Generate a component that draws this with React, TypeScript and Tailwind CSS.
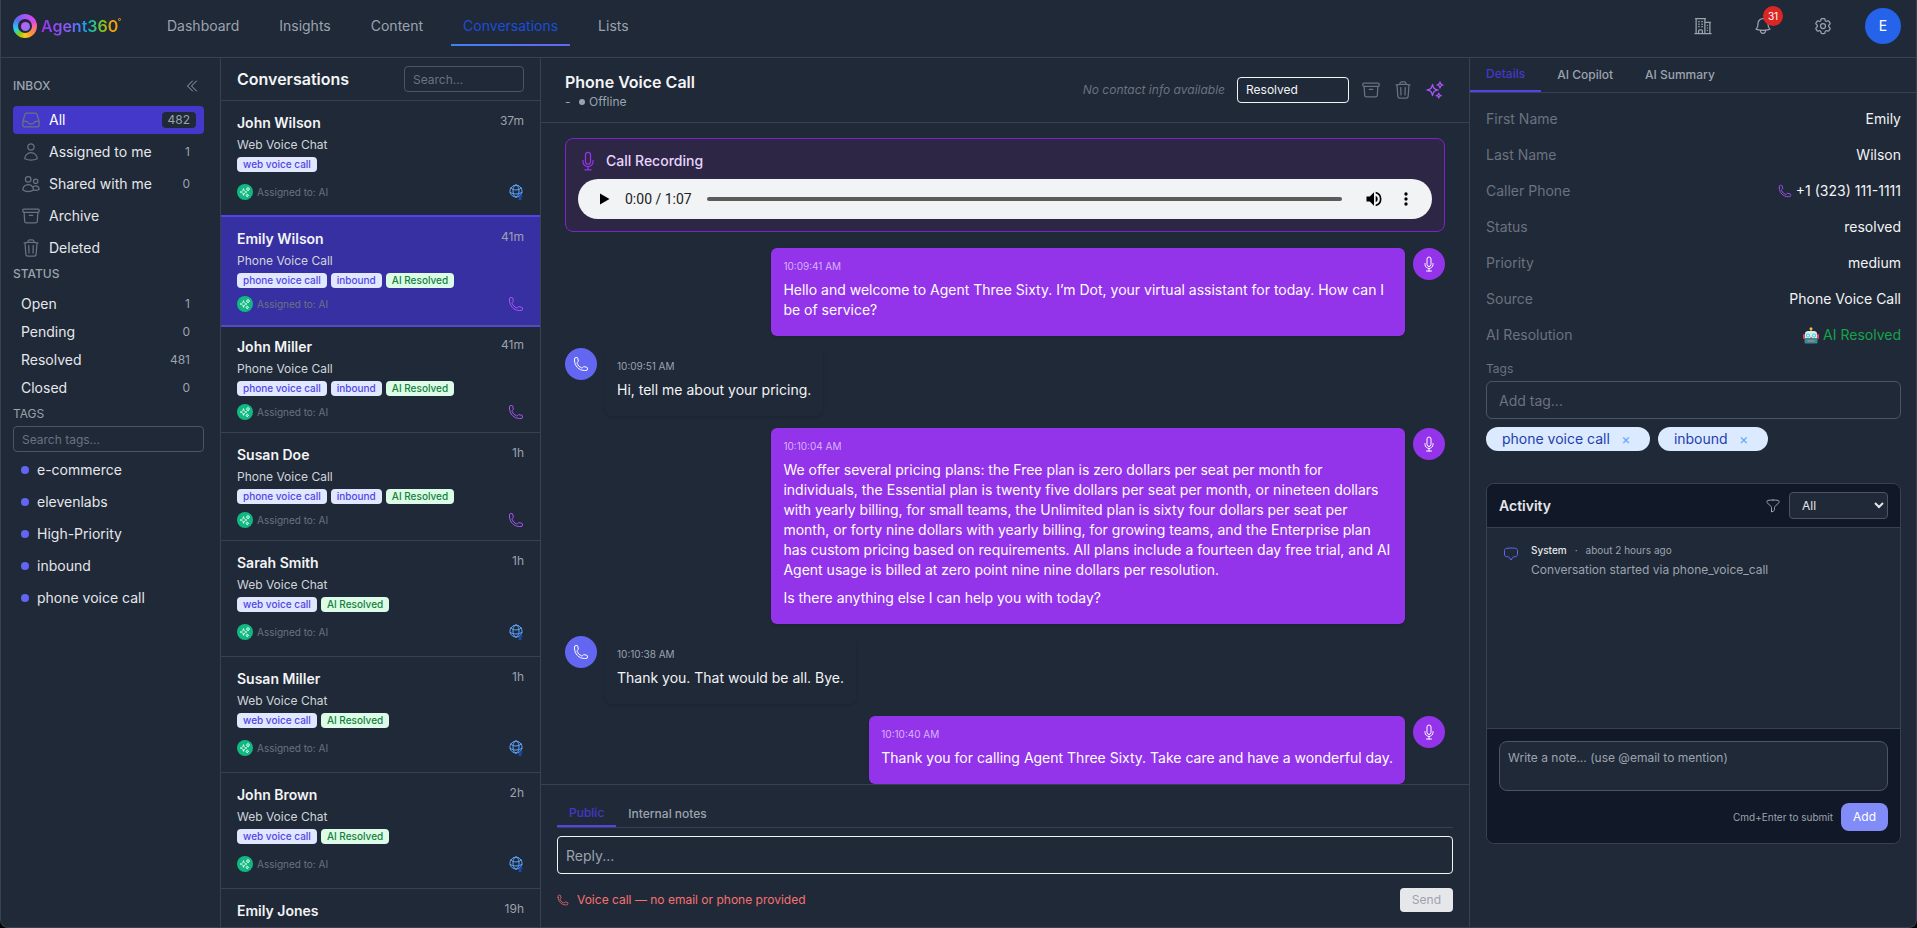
import type { ReactNode } from "react";
import {
  HiOutlineArchiveBox,
  HiOutlineBell,
  HiOutlineBuildingOffice2,
  HiOutlineChatBubbleBottomCenter,
  HiOutlineChevronDoubleLeft,
  HiOutlineCog6Tooth,
  HiOutlineFunnel,
  HiOutlineGlobeAlt,
  HiOutlineInbox,
  HiOutlineMicrophone,
  HiOutlinePhone,
  HiOutlineSparkles,
  HiOutlineTrash,
  HiOutlineUser,
  HiOutlineUsers,
} from "react-icons/hi2";

const navLinks = ["Dashboard", "Insights", "Content", "Conversations", "Lists"];

const inboxItems = [
  { label: "All", count: "482", icon: HiOutlineInbox, active: true },
  { label: "Assigned to me", count: "1", icon: HiOutlineUser },
  { label: "Shared with me", count: "0", icon: HiOutlineUsers },
  { label: "Archive", icon: HiOutlineArchiveBox },
  { label: "Deleted", icon: HiOutlineTrash },
];

const statuses = [
  { label: "Open", count: "1" },
  { label: "Pending", count: "0" },
  { label: "Resolved", count: "481" },
  { label: "Closed", count: "0" },
];

const tagList = ["e-commerce", "elevenlabs", "High-Priority", "inbound", "phone voice call"];

type Conversation = {
  name: string;
  time: string;
  channel: "web" | "phone";
  tags: string[];
  resolved?: boolean;
  selected?: boolean;
};

const conversations: Conversation[] = [
  { name: "John Wilson", time: "37m", channel: "web", tags: ["web voice call"] },
  { name: "Emily Wilson", time: "41m", channel: "phone", tags: ["phone voice call", "inbound"], resolved: true, selected: true },
  { name: "John Miller", time: "41m", channel: "phone", tags: ["phone voice call", "inbound"], resolved: true },
  { name: "Susan Doe", time: "1h", channel: "phone", tags: ["phone voice call", "inbound"], resolved: true },
  { name: "Sarah Smith", time: "1h", channel: "web", tags: ["web voice call"], resolved: true },
  { name: "Susan Miller", time: "1h", channel: "web", tags: ["web voice call"], resolved: true },
  { name: "John Brown", time: "2h", channel: "web", tags: ["web voice call"], resolved: true },
  { name: "Emily Jones", time: "19h", channel: "web", tags: ["web voice call"], resolved: true },
];

type Message = { from: "agent" | "caller"; time: string; text: string[] };

const messages: Message[] = [
  {
    from: "agent",
    time: "10:09:41 AM",
    text: ["Hello and welcome to Agent Three Sixty. I’m Dot, your virtual assistant for today. How can I be of service?"],
  },
  { from: "caller", time: "10:09:51 AM", text: ["Hi, tell me about your pricing."] },
  {
    from: "agent",
    time: "10:10:04 AM",
    text: [
      "We offer several pricing plans: the Free plan is zero dollars per seat per month for individuals, the Essential plan is twenty five dollars per seat per month, or nineteen dollars with yearly billing, for small teams, the Unlimited plan is sixty four dollars per seat per month, or forty nine dollars with yearly billing, for growing teams, and the Enterprise plan has custom pricing based on requirements. All plans include a fourteen day free trial, and AI Agent usage is billed at zero point nine nine dollars per resolution.",
      "Is there anything else I can help you with today?",
    ],
  },
  { from: "caller", time: "10:10:38 AM", text: ["Thank you. That would be all. Bye."] },
  {
    from: "agent",
    time: "10:10:40 AM",
    text: ["Thank you for calling Agent Three Sixty. Take care and have a wonderful day."],
  },
];

function Logo() {
  return (
    <a href="#" className="flex items-center gap-1 w-[142px] h-9">
      <span className="flex items-center justify-center size-6 rounded-full bg-[conic-gradient(from_0deg,#a855f7,#d946ef_60deg,#fb7185_100deg,#fb923c_140deg,#facc15_180deg,#84cc16_215deg,#22d3ee_250deg,#6366f1_310deg,#a855f7)]">
        <span className="flex items-center justify-center size-[14px] rounded-full bg-[#1f2937]">
          <span className="size-[9px] rounded-full bg-gradient-to-br from-[#d946ef] to-[#6d7cf8]" />
        </span>
      </span>
      <span className="flex items-start">
        <span className="text-base font-semibold bg-[linear-gradient(90deg,#9333ea,#8b5cf6_35%,#3b82f6_52%,#06b6d4_62%,#84cc16_80%,#f59e0b_92%)] bg-clip-text text-transparent">
          Agent360
        </span>
        <span className="size-[3px] mt-1 rounded-full border border-[#f59e0b]" />
      </span>
    </a>
  );
}

function TopBar() {
  return (
    <header className="flex items-start justify-between h-[58px] shrink-0 pt-2 pl-3 pr-[15px] border-b border-[#374151]">
      <div className="flex">
        <Logo />
        <nav className="flex gap-4">
          {navLinks.map((label) => (
            <a
              key={label}
              href="#"
              className={
                label === "Conversations"
                  ? "relative px-3 py-2 text-sm text-[#1d4ed8]"
                  : "px-3 py-2 text-sm text-[#9ca3af]"
              }
            >
              {label}
              {label === "Conversations" && (
                <span className="absolute inset-x-0 top-full h-0.5 bg-gradient-to-r from-[#3b82f6] to-[#6366f1]" />
              )}
            </a>
          ))}
        </nav>
      </div>
      <div className="flex gap-6 text-[#9ca3af]">
        <button aria-label="Organization" className="flex items-center justify-center size-9">
          <HiOutlineBuildingOffice2 className="size-5" />
        </button>
        <button aria-label="Notifications" className="relative flex items-center justify-center size-9">
          <HiOutlineBell className="size-5" />
          <span className="absolute -top-0.5 -right-0.5 flex items-center justify-center size-5 rounded-full bg-[#dc2626] text-white text-[10px]">
            31
          </span>
        </button>
        <button aria-label="Settings" className="flex items-center justify-center size-9">
          <HiOutlineCog6Tooth className="size-5" />
        </button>
        <button className="flex items-center justify-center size-9 rounded-full bg-[#2563eb] text-white text-sm">
          E
        </button>
      </div>
    </header>
  );
}

function Sidebar() {
  return (
    <aside className="w-[220px] shrink-0 pl-3 pr-4 pt-4 border-r border-[#374151] text-[#e5e7eb] text-sm">
      <div className="flex items-center justify-between h-6 mb-2 pr-1">
        <h2 className="text-xs font-medium text-[#9ca3af]">INBOX</h2>
        <button aria-label="Collapse sidebar" className="text-[#9ca3af]">
          <HiOutlineChevronDoubleLeft className="size-4" />
        </button>
      </div>
      <ul className="flex flex-col gap-1">
        {inboxItems.map(({ label, count, icon: Icon, active }) => (
          <li key={label}>
            <a
              href="#"
              className={
                active
                  ? "flex items-center gap-2 h-7 px-2 rounded bg-[#4338ca] text-white"
                  : "flex items-center gap-2 h-7 px-2 rounded"
              }
            >
              <Icon className="size-5 text-[#6b7280]" />
              <span className="flex-1">{label}</span>
              {count && (
                <span
                  className={
                    active
                      ? "px-1.5 rounded bg-[#1f2937] text-xs text-[#9ca3af]"
                      : "px-1.5 text-xs text-[#9ca3af]"
                  }
                >
                  {count}
                </span>
              )}
            </a>
          </li>
        ))}
      </ul>

      <h2 className="mt-1 mb-2 text-xs font-medium leading-4 text-[#9ca3af]">STATUS</h2>
      <ul>
        {statuses.map((s) => (
          <li key={s.label}>
            <a href="#" className="flex items-center justify-between h-7 pl-2 pr-[14px]">
              <span>{s.label}</span>
              <span className="text-xs text-[#9ca3af]">{s.count}</span>
            </a>
          </li>
        ))}
      </ul>

      <h2 className="mt-1 mb-1 text-xs leading-4 text-[#9ca3af]">TAGS</h2>
      <input
        type="text"
        aria-label="Search tags"
        placeholder="Search tags..."
        className="block w-full h-[26px] px-2 mb-1 rounded border border-[#4b5563] text-xs placeholder:text-[#6b7280]"
      />
      <ul className="flex flex-col gap-1">
        {tagList.map((tag) => (
          <li key={tag}>
            <a href="#" className="flex items-center gap-2 h-7 px-2">
              <span className="size-2 rounded-full bg-[#6366f1]" />
              {tag}
            </a>
          </li>
        ))}
      </ul>
    </aside>
  );
}

function ConversationItem({ item }: { item: Conversation }) {
  return (
    <li
      className={
        item.selected
          ? "relative z-10 px-4 py-3 border-b border-[#374151] bg-[#3730a3] ring-2 ring-[#4f46e5]"
          : "px-4 py-3 border-b border-[#374151]"
      }
    >
      <div className="flex items-start justify-between">
        <h3 className="text-sm font-semibold text-[#f3f4f6]">{item.name}</h3>
        <span className="text-xs text-[#9ca3af]">{item.time}</span>
      </div>
      <p className="mt-1 text-xs text-[#d1d5db]">
        {item.channel === "web" ? "Web Voice Chat" : "Phone Voice Call"}
      </p>
      <div className="flex gap-1 mt-1 text-[10px] leading-[15px] font-medium">
        {item.tags.map((tag) => (
          <span key={tag} className="px-1.5 rounded bg-[#e0e7ff] text-[#4f46e5]">
            {tag}
          </span>
        ))}
        {item.resolved && (
          <span className="px-1.5 rounded bg-[#dcfce7] text-[#15803d]">AI Resolved</span>
        )}
      </div>
      <div className="flex items-center justify-between mt-2">
        <div className="flex items-center gap-1">
          <span className="flex items-center justify-center size-4 rounded-full bg-[#10b981] text-white">
            <HiOutlineSparkles className="size-3" />
          </span>
          <span className="text-[10px] leading-4 text-[#6b7280]">Assigned to: AI</span>
        </div>
        {item.channel === "web" ? (
          <span className="relative h-6 pt-[3px] text-[#60a5fa]">
            <HiOutlineGlobeAlt className="size-4" />
            <HiOutlineMicrophone className="absolute right-0 bottom-1 size-2 text-[#2563eb]" />
          </span>
        ) : (
          <HiOutlinePhone className="size-4 text-[#a855f7]" />
        )}
      </div>
    </li>
  );
}

function ConversationList() {
  return (
    <section className="flex flex-col w-80 shrink-0 border-r border-[#374151]">
      <div className="flex items-center justify-between h-[43px] shrink-0 px-4 border-b border-[#374151]">
        <h2 className="font-semibold text-[#f3f4f6]">Conversations</h2>
        <input
          type="text"
          aria-label="Search conversations"
          placeholder="Search..."
          className="w-[120px] h-[26px] px-2 rounded border border-[#4b5563] text-xs placeholder:text-[#6b7280]"
        />
      </div>
      <ul className="flex-1 overflow-hidden">
        {conversations.map((item) => (
          <ConversationItem key={item.name} item={item} />
        ))}
      </ul>
    </section>
  );
}

function CallRecording() {
  return (
    <div className="p-3 mb-4 rounded-lg border border-[#7e22ce] bg-[#2d2745]">
      <div className="flex items-center gap-2 mb-2">
        <HiOutlineMicrophone className="size-5 text-[#9333ea]" />
        <span className="text-sm font-medium text-[#e9d5ff]">Call Recording</span>
      </div>
      <div className="flex items-center h-10 pl-5 pr-4 rounded-full bg-[#f1f3f4] text-black">
        <button aria-label="Play" className="w-[27px]">
          <svg viewBox="0 0 12 14" className="w-3 h-[14px] fill-current">
            <path d="M2 1.5v11L11.5 7z" />
          </svg>
        </button>
        <span className="w-[82px] font-[Roboto,sans-serif] text-sm text-[#202124]">0:00 / 1:07</span>
        <div className="flex-1 h-1 rounded-full bg-[#5a5c5a]" />
        <button aria-label="Mute" className="ml-[22px]">
          <svg viewBox="0 0 24 24" className="size-5 fill-current">
            <path d="M3 9v6h4l5 5V4L7 9H3zm13.5 3A4.5 4.5 0 0 0 14 7.97v8.05A4.48 4.48 0 0 0 16.5 12zM14 3.23v2.06a7 7 0 0 1 0 13.42v2.06a9 9 0 0 0 0-17.54z" />
          </svg>
        </button>
        <button aria-label="More options" className="ml-3">
          <svg viewBox="0 0 24 24" className="size-5 fill-current">
            <path d="M12 8a2 2 0 1 0 0-4 2 2 0 0 0 0 4zm0 2a2 2 0 1 0 0 4 2 2 0 0 0 0-4zm0 6a2 2 0 1 0 0 4 2 2 0 0 0 0-4z" />
          </svg>
        </button>
      </div>
    </div>
  );
}

function MessageRow({ message }: { message: Message }) {
  const isAgent = message.from === "agent";

  return (
    <div className={isAgent ? "flex justify-end gap-2" : "flex gap-2"}>
      {!isAgent && (
        <span className="flex items-center justify-center size-8 shrink-0 rounded-full bg-[#6366f1] text-white">
          <HiOutlinePhone className="size-4" />
        </span>
      )}
      <div
        className={
          isAgent
            ? "max-w-[72%] px-3 pt-3 pb-2 rounded-md bg-[#9333ea] text-white shadow-sm"
            : "max-w-[72%] px-3 pt-3 pb-2 rounded-md text-[#f3f4f6] shadow-sm"
        }
      >
        <div
          className={
            isAgent
              ? "mb-2 text-[10px] leading-3 text-[#d8b4fe]"
              : "mb-2 text-[10px] leading-3 text-[#9ca3af]"
          }
        >
          {message.time}
        </div>
        {message.text.map((paragraph) => (
          <p key={paragraph} className="mb-2 text-sm">
            {paragraph}
          </p>
        ))}
      </div>
      {isAgent && (
        <span className="flex items-center justify-center size-8 shrink-0 rounded-full bg-[#9333ea] text-white">
          <HiOutlineMicrophone className="size-4" />
        </span>
      )}
    </div>
  );
}

function Composer() {
  return (
    <div className="shrink-0 px-4 pt-4 pb-[15px] border-t border-[#374151]">
      <div className="flex mb-2 border-b border-[#374151] text-xs font-medium">
        <button className="px-3 py-1 border-b-2 border-[#4f46e5] text-[#4338ca]">Public</button>
        <button className="px-3 py-1 text-[#9ca3af]">Internal notes</button>
      </div>
      <input
        type="text"
        aria-label="Reply"
        placeholder="Reply..."
        className="block w-full h-[38px] px-2 rounded border border-[#f3f4f6] text-sm placeholder:text-[#9ca3af]"
      />
      <div className="flex items-center justify-between mt-[14px]">
        <span className="flex items-center gap-2 text-xs text-[#f87171]">
          <HiOutlinePhone className="size-3" />
          Voice call — no email or phone provided
        </span>
        <button className="h-6 px-3 rounded bg-[#e5e7eb] text-xs text-[#9ca3af]">Send</button>
      </div>
    </div>
  );
}

function ChatPanel() {
  return (
    <main className="flex flex-col flex-1 min-w-0">
      <div className="flex items-center justify-between h-[65px] shrink-0 px-6 border-b border-[#374151]">
        <div className="pt-1">
          <h1 className="text-base leading-5 font-semibold text-[#f3f4f6]">Phone Voice Call</h1>
          <div className="flex items-center h-5 text-xs text-[#9ca3af]">
            <span className="w-[14px]">-</span>
            <span className="size-1.5 mr-1 rounded-full bg-[#9ca3af]" />
            Offline
          </div>
        </div>
        <div className="flex items-center gap-3 text-[#6b7280]">
          <span className="text-xs italic">No contact info available</span>
          <select
            aria-label="Conversation status"
            className="w-28 h-[26px] px-2 appearance-none rounded border border-[#f3f4f6] bg-[#1f2937] text-xs text-[#f3f4f6]"
          >
            <option>Resolved</option>
            <option>Open</option>
            <option>Pending</option>
            <option>Closed</option>
          </select>
          <button aria-label="Archive">
            <HiOutlineArchiveBox className="size-5" />
          </button>
          <button aria-label="Delete">
            <HiOutlineTrash className="size-5" />
          </button>
          <button aria-label="AI assist" className="text-[#a855f7]">
            <HiOutlineSparkles className="size-5" />
          </button>
        </div>
      </div>
      <div className="flex-1 min-h-0 overflow-hidden px-6 pt-[15px]">
        <CallRecording />
        <div className="flex flex-col gap-3">
          {messages.map((message) => (
            <MessageRow key={message.time} message={message} />
          ))}
        </div>
      </div>
      <Composer />
    </main>
  );
}

function RobotIcon() {
  return (
    <svg viewBox="0 0 16 17" className="w-4 h-[17px]">
      <path d="M7.5 2.5h1V5h-1z" fill="#94a3b8" />
      <circle cx="8" cy="1.8" r="1.5" fill="#fbbf24" />
      <rect x="0" y="7" width="2" height="5" rx="1" fill="#ef4444" />
      <rect x="14" y="7" width="2" height="5" rx="1" fill="#ef4444" />
      <path d="M2 16V6.5C2 5 3.5 4 5 4h6c1.5 0 3 1 3 2.5V16z" fill="#d7eaee" />
      <path d="M1.5 11h13v4c0 1-.5 1.5-1.5 1.5H3c-1 0-1.5-.5-1.5-1.5z" fill="#3f8791" />
      <circle cx="5" cy="8.5" r="2" fill="#22d3ee" />
      <circle cx="11" cy="8.5" r="2" fill="#22d3ee" />
      <circle cx="5" cy="8.5" r="1" fill="#fff" />
      <circle cx="11" cy="8.5" r="1" fill="#fff" />
      <path d="M8 9.5 9 11.5H7z" fill="#dc2626" />
      <path d="M4.5 13h7v2h-7z" fill="#7b8c93" />
    </svg>
  );
}

function DetailRow({ label, children }: { label: string; children: ReactNode }) {
  return (
    <div className="flex items-center justify-between h-9">
      <dt className="text-[#6b7280]">{label}</dt>
      <dd className="flex items-center gap-1 text-[#f3f4f6]">{children}</dd>
    </div>
  );
}

function ActivityCard() {
  return (
    <section className="mt-8 rounded-lg border border-[#374151] overflow-hidden">
      <div className="flex items-center justify-between h-11 px-3 border-b border-[#374151] bg-[#111827]">
        <h3 className="text-sm font-semibold text-[#e5e7eb]">Activity</h3>
        <div className="flex items-center gap-2">
          <HiOutlineFunnel className="size-4 text-[#9ca3af]" />
          <select
            aria-label="Activity filter"
            className="w-[99px] h-[27px] px-2 rounded border border-[#4b5563] bg-[#1f2937] text-xs text-[#e5e7eb]"
          >
            <option>All</option>
            <option>Notes</option>
            <option>System</option>
          </select>
        </div>
      </div>
      <div className="flex items-start gap-3 h-[200px] px-4 pt-[14px]">
        <HiOutlineChatBubbleBottomCenter className="size-4 mt-1 text-[#6366f1]" />
        <div>
          <div className="flex gap-2 text-[10px] leading-4 text-[#9ca3af]">
            <span className="font-medium text-[#e5e7eb]">System</span>
            <span>·</span>
            <span>about 2 hours ago</span>
          </div>
          <p className="mt-1 text-xs text-[#9ca3af]">Conversation started via phone_voice_call</p>
        </div>
      </div>
      <div className="p-3 border-t border-[#374151] bg-[#111827]">
        <textarea
          aria-label="Note"
          placeholder="Write a note... (use @email to mention)"
          className="block w-full h-[50px] px-2 py-2 resize-none rounded-lg border border-[#4b5563] bg-[#1f2937] text-xs placeholder:text-[#9ca3af]"
        />
        <div className="flex items-center justify-end gap-2 mt-3">
          <span className="text-[10px] text-[#9ca3af]">Cmd+Enter to submit</span>
          <button className="h-7 px-3 rounded-lg bg-[#818cf8] text-xs text-white">Add</button>
        </div>
      </div>
    </section>
  );
}

function DetailsPanel() {
  return (
    <aside className="flex flex-col w-[447px] shrink-0 border-l border-[#374151]">
      <div className="flex border-b border-[#374151] text-xs font-medium">
        <button className="px-4 py-2 border-b-2 border-[#4f46e5] text-[#4338ca]">Details</button>
        <button className="px-4 py-2 text-[#9ca3af]">AI Copilot</button>
        <button className="px-4 py-2 text-[#9ca3af]">AI Summary</button>
      </div>
      <div className="pt-2 pl-4 pr-[15px]">
        <dl className="text-sm">
          <DetailRow label="First Name">Emily</DetailRow>
          <DetailRow label="Last Name">Wilson</DetailRow>
          <DetailRow label="Caller Phone">
            <HiOutlinePhone className="size-3.5 text-[#a855f7]" />
            +1 (323) 111-1111
          </DetailRow>
          <DetailRow label="Status">resolved</DetailRow>
          <DetailRow label="Priority">medium</DetailRow>
          <DetailRow label="Source">Phone Voice Call</DetailRow>
          <DetailRow label="AI Resolution">
            <RobotIcon />
            <span className="text-[#16a34a]">AI Resolved</span>
          </DetailRow>
        </dl>

        <label htmlFor="add-tag" className="block mt-2 mb-1 text-xs text-[#6b7280]">
          Tags
        </label>
        <input
          id="add-tag"
          type="text"
          placeholder="Add tag..."
          className="block w-full h-[38px] px-3 rounded-md border border-[#4b5563] text-sm placeholder:text-[#6b7280]"
        />
        <div className="flex gap-2 mt-2">
          {["phone voice call", "inbound"].map((tag) => (
            <span
              key={tag}
              className="flex items-center gap-2 h-6 px-4 rounded-full bg-[#dbeafe] text-sm text-[#1e40af]"
            >
              {tag}
              <button aria-label="Remove tag" className="w-4 text-[#60a5fa]">
                ×
              </button>
            </span>
          ))}
        </div>

        <ActivityCard />
      </div>
    </aside>
  );
}

export default function App() {
  return (
    <div className="h-screen bg-black">
      <div className="flex flex-col h-full overflow-hidden rounded-b-lg border-x border-b border-[#374151] bg-[#1f2937] font-[Inter,sans-serif]">
        <TopBar />
        <div className="flex flex-1 min-h-0">
          <Sidebar />
          <ConversationList />
          <ChatPanel />
          <DetailsPanel />
        </div>
      </div>
    </div>
  );
}
